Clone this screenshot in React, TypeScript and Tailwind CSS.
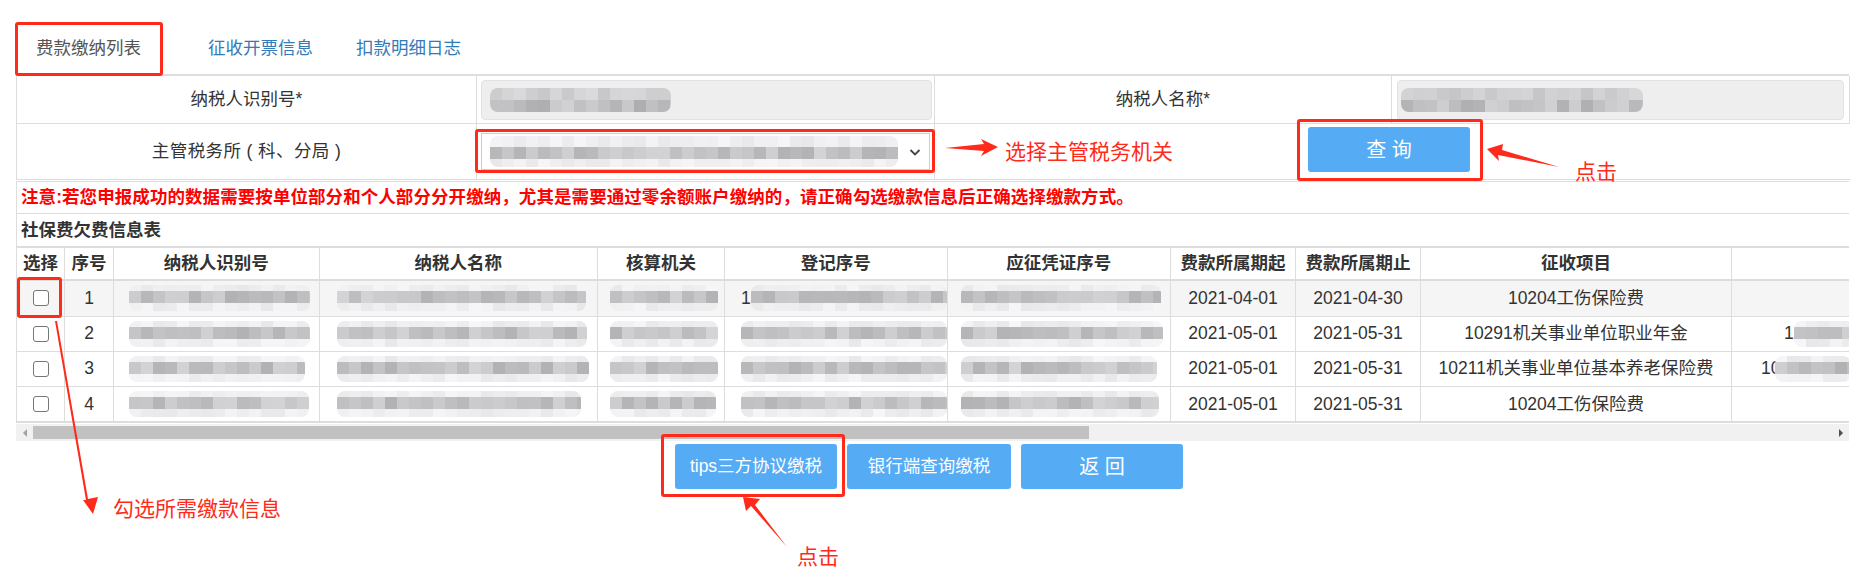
import React from "react";

function shade(seed: number, i: number, base: number, range: number) {
  const v = Math.abs(Math.sin(seed * 12.9898 + i * 78.233) * 43758.5453) % 1;
  const g = base + Math.round(v * range);
  return `rgb(${g},${g - 1},${g + 1})`;
}

function Strip({ w, seed, base, range, h }: { w: number; seed: number; base: number; range: number; h: number }) {
  const n = Math.ceil(w / 12);
  return (
    <div className="flex overflow-hidden" style={{ width: w, height: h }}>
      {Array.from({ length: n }).map((_, i) => (
        <div key={i} className="w-[12px] shrink-0" style={{ background: shade(seed, i, base, range) }} />
      ))}
    </div>
  );
}

function Mosaic({ w, seed, top = 6, mid = 12, bottom = 8, ml = 0 }: { w: number; seed: number; top?: number; mid?: number; bottom?: number; ml?: number }) {
  return (
    <div className="relative flex flex-col overflow-hidden rounded-[8px]" style={{ width: w, marginLeft: ml }}>
      <Strip w={w} seed={seed + 1} base={232} range={14} h={top} />
      <Strip w={w} seed={seed} base={178} range={34} h={mid} />
      <Strip w={w} seed={seed + 2} base={232} range={14} h={bottom} />
    </div>
  );
}

function InputMosaic({ w, seed }: { w: number; seed: number }) {
  return (
    <div className="flex flex-col overflow-hidden rounded-[8px]" style={{ width: w }}>
      <Strip w={w} seed={seed + 1} base={198} range={20} h={12} />
      <Strip w={w} seed={seed} base={174} range={36} h={12} />
    </div>
  );
}

const widths = [48, 49, 205.5, 278.5, 127, 222.5, 223.5, 125, 125, 311, 300];
const headers = ["选择", "序号", "纳税人识别号", "纳税人名称", "核算机关", "登记序号", "应征凭证序号", "费款所属期起", "费款所属期止", "征收项目", ""];

const rows = [
  { n: "1", h: "h-[36px]", a: 181, b: 249, c: 108, e: 200, from: "2021-04-01", to: "2021-04-30", item: "10204工伤保险费", last: 0, lead: true },
  { n: "2", h: "h-[35px]", a: 181, b: 250, c: 108, e: 202, from: "2021-05-01", to: "2021-05-31", item: "10291机关事业单位职业年金", last: 1, lead: false },
  { n: "3", h: "h-[35px]", a: 176, b: 252, c: 108, e: 196, from: "2021-05-01", to: "2021-05-31", item: "10211机关事业单位基本养老保险费", last: 2, lead: false },
  { n: "4", h: "h-[36px]", a: 180, b: 244, c: 106, e: 198, from: "2021-05-01", to: "2021-05-31", item: "10204工伤保险费", last: 0, lead: false },
];

const Btn = ({ w, big, children }: { w: string; big?: boolean; children: React.ReactNode }) => (
  <button className={`${w} ${big ? "text-[20px]" : "text-[17.5px]"} h-[45px] bg-[#55acf5] rounded-[3px] text-white flex items-center justify-center`}>{children}</button>
);

const box = "absolute border-[3px] border-[#ff2a1a] rounded-[3px] pointer-events-none";
const note = "absolute text-[21px] leading-[24px] text-[#ff2a1a] whitespace-nowrap";

export default function App() {
  return (
    <div className="relative w-[1861px] h-[584px] overflow-hidden bg-white text-[#333] text-[17.5px] font-['Liberation_Sans','Noto_Sans_CJK_SC',sans-serif]">
      <div className="pt-[22px] pl-[16px] pr-[12px]">
        {/* tabs */}
        <div className="flex h-[54px] pt-[1px] items-center border-b-[2px] border-[#ddd]">
          <span className="w-[145px] text-center text-[#555]">费款缴纳列表</span>
          <span className="ml-[47px] text-[#337ab7]">征收开票信息</span>
          <span className="ml-[43px] text-[#337ab7]">扣款明细日志</span>
        </div>

        {/* form */}
        <div className="grid grid-cols-[460px_458px_457px_458px] border-l border-[#ddd]">
          <div className="h-[48px] flex items-center justify-center border-b border-r border-[#ddd]">纳税人识别号*</div>
          <div className="h-[48px] flex items-center pl-[4px] pr-[2px] border-b border-r border-[#ddd]">
            <div className="w-full h-[40px] bg-[#eee] border border-[#e2e2e2] rounded-[4px] flex items-center pl-[8px]">
              <InputMosaic w={181} seed={3} />
            </div>
          </div>
          <div className="h-[48px] flex items-center justify-center border-b border-r border-[#ddd]">纳税人名称*</div>
          <div className="h-[48px] flex items-center pl-[5px] pr-[5px] border-b border-r border-[#ddd]">
            <div className="w-full h-[40px] bg-[#eee] border border-[#e2e2e2] rounded-[4px] flex items-center pl-[3px]">
              <InputMosaic w={242} seed={7} />
            </div>
          </div>
          <div className="h-[56px] flex items-center justify-center border-b border-r border-[#ddd] tracking-[0.4px]">主管税务所 ( 科、分局 )</div>
          <div className="h-[56px] flex items-center pl-[4px] pr-[4px] border-b border-r border-[#ddd]">
            <div className="w-full h-[37px] bg-white border border-[#ccc] flex items-center pl-[8px] pr-[6px] justify-between">
              <Mosaic w={408} seed={11} top={11} mid={12} bottom={8} />
              <svg width="14" height="14" viewBox="0 0 14 14" className="mr-[1px]"><path d="M2.5 5 L7 9.5 L11.5 5" fill="none" stroke="#444" strokeWidth="1.8" /></svg>
            </div>
          </div>
          <div className="h-[56px] border-b border-[#ddd] col-span-2 flex items-start pt-[3px] pl-[373px]">
            <Btn w="w-[162px]" big>查&nbsp;询</Btn>
          </div>
        </div>

        {/* notice */}
        <div className="h-[33px] mt-[1px] border-l border-t border-[#ddd] flex items-center pl-[4px] font-bold text-[#ff0000] whitespace-nowrap border-b tracking-[0.07px]">
          注意:若您申报成功的数据需要按单位部分和个人部分分开缴纳，尤其是需要通过零余额账户缴纳的，请正确勾选缴款信息后正确选择缴款方式。
        </div>
        <div className="h-[34px] border-l border-[#ddd] flex items-center pl-[4px] font-bold border-b-[2px] border-b-[#ddd]">社保费欠费信息表</div>

        {/* table */}
        <div className="overflow-hidden w-[1833px]">
          <table className="table-fixed border-collapse w-[2015px] border-l border-[#ddd]">
            <colgroup>
              {widths.map((w, i) => (
                <col key={i} style={{ width: w }} />
              ))}
            </colgroup>
            <thead>
              <tr className="h-[32px] border-b-[2px] border-[#ddd]">
                {headers.map((h, i) => (
                  <th key={i} className="border-r border-[#ddd] font-bold text-center p-0 whitespace-nowrap">{h}</th>
                ))}
              </tr>
            </thead>
            <tbody>
              {rows.map((r, idx) => (
                <tr key={r.n} className={`${r.h} border-b border-[#ddd] ${idx === 3 ? "border-b-[2px]" : ""} ${idx === 0 ? "bg-[#f5f5f5]" : "bg-white"}`}>
                  <td className="border-r border-[#ddd] p-0">
                    <div className="flex justify-center"><div className="w-[16px] h-[16px] border border-[#767676] rounded-[3px] bg-white" /></div>
                  </td>
                  <td className="border-r border-[#ddd] p-0 text-center">{r.n}</td>
                  <td className="border-r border-[#ddd] p-0"><Mosaic w={r.a} seed={20 + idx} ml={15} /></td>
                  <td className="border-r border-[#ddd] p-0"><Mosaic w={r.b} seed={30 + idx} ml={17} /></td>
                  <td className="border-r border-[#ddd] p-0"><Mosaic w={r.c} seed={40 + idx} ml={12} /></td>
                  <td className="border-r border-[#ddd] p-0">
                    <div className="flex items-center pl-[16px]">
                      {r.lead && <span className="w-[10px]">1</span>}
                      <Mosaic w={r.lead ? 197 : 206} seed={50 + idx} />
                    </div>
                  </td>
                  <td className="border-r border-[#ddd] p-0"><Mosaic w={r.e} seed={60 + idx} ml={13} /></td>
                  <td className="border-r border-[#ddd] p-0 text-center">{r.from}</td>
                  <td className="border-r border-[#ddd] p-0 text-center">{r.to}</td>
                  <td className="border-r border-[#ddd] p-0 text-center whitespace-nowrap">{r.item}</td>
                  <td className="border-r border-[#ddd] p-0">
                    {r.last === 1 && (
                      <div className="flex items-center pl-[52px]"><span>1</span><Mosaic w={60} seed={71} /></div>
                    )}
                    {r.last === 2 && (
                      <div className="flex items-center pl-[29px]"><span>10</span><Mosaic w={76} seed={72} ml={-5} /></div>
                    )}
                  </td>
                </tr>
              ))}
            </tbody>
          </table>
        </div>

        {/* scrollbar */}
        <div className="mt-[1px] h-[17px] w-[1833px] bg-[#f1f1f1] flex items-center">
          <div className="w-[17px] flex justify-center">
            <div className="w-0 h-0 border-y-[4px] border-y-transparent border-r-[4px] border-r-[#a3a3a3]" />
          </div>
          <div className="w-[1056px] h-[13px] bg-[#c1c1c1]" />
          <div className="ml-auto w-[17px] flex justify-center">
            <div className="w-0 h-0 border-y-[4px] border-y-transparent border-l-[4px] border-l-[#505050]" />
          </div>
        </div>

        {/* bottom buttons */}
        <div className="mt-[3px] pl-[659px] flex gap-[10px]">
          <Btn w="w-[162px]">tips三方协议缴税</Btn>
          <Btn w="w-[164px]">银行端查询缴税</Btn>
          <Btn w="w-[162px]" big>返&nbsp;回</Btn>
        </div>
      </div>

      {/* annotations */}
      <div className={`${box} left-[15px] top-[22px] w-[148px] h-[54px]`} />
      <div className={`${box} left-[475px] top-[129px] w-[460px] h-[44px]`} />
      <div className={`${box} left-[1297px] top-[119px] w-[186px] h-[62px]`} />
      <div className={`${box} left-[17px] top-[277px] w-[45px] h-[41px]`} />
      <div className={`${box} left-[661px] top-[434px] w-[184px] h-[63px]`} />

      <svg className="absolute left-0 top-0 pointer-events-none" width="1861" height="584">
        <g fill="#ff2a1a">
          <path d="M945 148 L984 144 L981 139 L998 147 L981 156 L984 151 Z" />
          <path d="M1487 149 L1503 144 L1502 150 L1559 167 L1498 155 L1499 161 Z" />
          <path d="M55 321 L57 321 L88 499 L98 497 L93 514 L83 500 L86 500 Z" />
          <path d="M743 497 L760 499 L755 505 L787 547 L751 506 L746 511 Z" />
        </g>
      </svg>

      <span className={`${note} left-[1005px] top-[140px]`}>选择主管税务机关</span>
      <span className={`${note} left-[1575px] top-[160px]`}>点击</span>
      <span className={`${note} left-[113px] top-[497px]`}>勾选所需缴款信息</span>
      <span className={`${note} left-[797px] top-[545px]`}>点击</span>
    </div>
  );
}
